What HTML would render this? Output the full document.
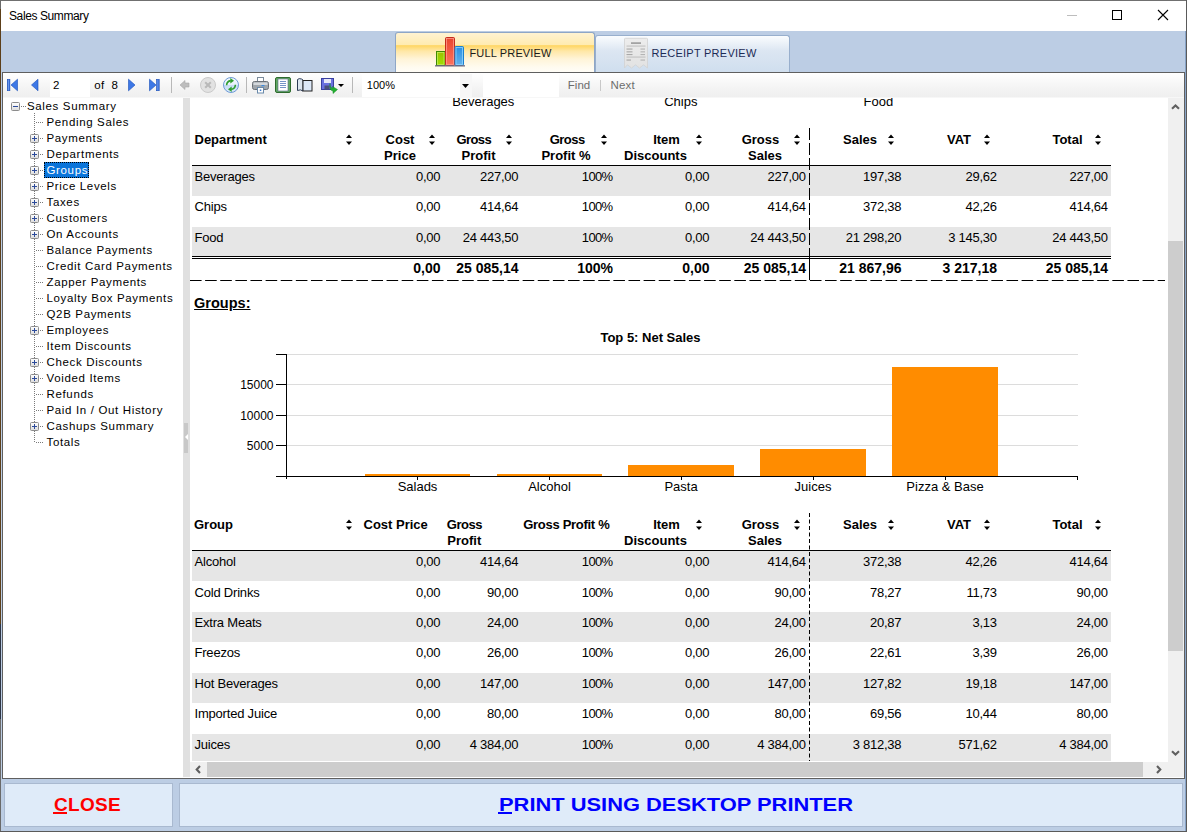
<!DOCTYPE html>
<html><head><meta charset="utf-8"><style>
*{margin:0;padding:0;box-sizing:border-box}
html,body{width:1187px;height:832px;overflow:hidden;background:#fff;font-family:"Liberation Sans",sans-serif}
.t{position:absolute;white-space:pre}
.r{position:absolute}
svg{position:absolute;overflow:visible}
</style></head><body>
<div class="r" style="left:0px;top:0px;width:1187px;height:832px;background:#BCCDE4"></div>
<div class="r" style="left:0px;top:0px;width:1187px;height:31px;background:#fff"></div>
<div class="r" style="left:0px;top:0px;width:1187px;height:1px;background:#707070"></div>
<div class="r" style="left:0px;top:0px;width:1px;height:832px;background:#6a6a6a"></div>
<div class="r" style="left:0px;top:9px;width:1px;height:615px;background:#5C3F1A"></div>
<div class="r" style="left:0px;top:624px;width:1px;height:95px;background:#2E3646"></div>
<div class="r" style="left:1186px;top:0px;width:1px;height:832px;background:#5a5a5a"></div>
<div class="r" style="left:0px;top:831px;width:1187px;height:1px;background:#5a5a5a"></div>
<div class="t" style="top:7.53px;font-size:12px;line-height:16px;color:#000;letter-spacing:-0.4px;left:9px;">Sales Summary</div>
<svg style="left:1067px;top:15px" width="10" height="1"><rect x="0" y="0" width="10" height="1" fill="#BDBDBD"/></svg>
<svg style="left:1112px;top:10px" width="10" height="10"><rect x="0.5" y="0.5" width="9" height="9" fill="none" stroke="#000" stroke-width="1"/></svg>
<svg style="left:1158px;top:10px" width="10" height="10"><path d="M0 0L10 10M10 0L0 10" stroke="#000" stroke-width="1.1"/></svg>
<div class="r" style="left:395px;top:32px;width:200px;height:41px;background:linear-gradient(#FFF3D2 0%,#FFEBB0 30%,#FFD663 31.5%,#FFE7A6 45%,#FFF4D8 65%,#FFFBEF 85%,#FFFDF8 100%);border:1px solid #8EA6C6;border-bottom:none;border-radius:3px 3px 0 0"></div>
<div class="r" style="left:595px;top:35px;width:195px;height:38px;background:linear-gradient(#FAFCFE 0%,#DCE6F2 40%,#CFDEEE 100%);border:1px solid #98AFCD;border-bottom:none;border-radius:3px 3px 0 0"></div>
<div class="t" style="top:45.66px;font-size:11px;line-height:15px;color:#1a1a1a;letter-spacing:0.15px;left:469.5px;">FULL PREVIEW</div>
<div class="t" style="top:45.66px;font-size:11px;line-height:15px;color:#1C2B55;letter-spacing:0.25px;left:651.5px;">RECEIPT PREVIEW</div>
<svg style="left:435px;top:37px" width="30" height="30">
<defs><linearGradient id="cg" x1="0" y1="0" x2="0" y2="1"><stop offset="0" stop-color="#9CC000"/><stop offset="1" stop-color="#A0E000"/></linearGradient>
<linearGradient id="cr" x1="0" y1="0" x2="0" y2="1"><stop offset="0" stop-color="#E8452C"/><stop offset="1" stop-color="#FF735E"/></linearGradient>
<linearGradient id="cb" x1="0" y1="0" x2="0" y2="1"><stop offset="0" stop-color="#2A8EE0"/><stop offset="1" stop-color="#66B4EC"/></linearGradient></defs>
<rect x="1.5" y="14.5" width="8.5" height="14" fill="url(#cg)" stroke="#3E8A00" stroke-width="1"/>
<rect x="2.5" y="15.5" width="6.5" height="12" fill="none" stroke="#C4EA5A" stroke-width="0.8"/>
<rect x="10.5" y="0.5" width="9" height="28" rx="1" fill="url(#cr)" stroke="#C32C1C" stroke-width="1"/>
<rect x="11.5" y="1.5" width="7" height="26" fill="none" stroke="#FF9C8A" stroke-width="0.8"/>
<rect x="20" y="9.5" width="8.5" height="19" rx="1" fill="url(#cb)" stroke="#1A80D0" stroke-width="1"/>
<rect x="21" y="10.5" width="6.5" height="17" fill="none" stroke="#8ED4FF" stroke-width="0.8"/>
<rect x="0" y="28.2" width="30" height="1.3" fill="#6E6A80"/>
</svg>
<svg style="left:624px;top:37.5px" width="25" height="31">
<defs><linearGradient id="rg" x1="0" y1="0" x2="0" y2="1"><stop offset="0" stop-color="#EDEDED"/><stop offset="1" stop-color="#E2E2E2"/></linearGradient></defs>
<path d="M0.5 1 Q0.5 0.3 1.5 0.3 H22.5 Q23.5 0.3 23.5 1 V30 L19.5 26.8 L15.5 30 L11.5 26.8 L7.5 30 L3.5 26.8 L0.5 30 Z" fill="url(#rg)" stroke="#D2D2D2" stroke-width="0.8"/>
<rect x="7" y="4.3" width="10" height="1.6" fill="#9c9c9c"/>
<rect x="2.5" y="7.6" width="19" height="0.9" fill="#b8b8b8"/>
<rect x="2.5" y="10.5" width="6" height="1.1" fill="#a8a8a8"/><rect x="16.5" y="10.5" width="4.5" height="1.1" fill="#b4b4b4"/>
<rect x="2.5" y="13.3" width="6" height="1.1" fill="#a8a8a8"/><rect x="16.5" y="13.3" width="4.5" height="1.1" fill="#b4b4b4"/>
<rect x="2.5" y="16" width="6" height="1.1" fill="#a8a8a8"/><rect x="16.5" y="16" width="4.5" height="1.1" fill="#b4b4b4"/>
<rect x="2.5" y="18.6" width="19" height="0.9" fill="#b8b8b8"/>
<rect x="2.5" y="21.5" width="4.5" height="1.1" fill="#a8a8a8"/><rect x="16.5" y="21.5" width="4.5" height="1.1" fill="#b4b4b4"/>
</svg>
<div class="r" style="left:2px;top:72px;width:1183px;height:707px;background:#fff;border:1px solid #5F5F5F"></div>
<div class="r" style="left:3px;top:73px;width:1181px;height:25px;background:linear-gradient(#FFFFFF,#F4F4F4 60%,#EFEFEF)"></div>
<div class="r" style="left:3px;top:97px;width:1181px;height:1px;background:#F7F7F7"></div>
<svg style="left:7px;top:79px" width="12" height="12"><defs><linearGradient id="bg1" x1="0" y1="0" x2="1" y2="0"><stop offset="0" stop-color="#1E56D0"/><stop offset="0.5" stop-color="#6E9CF0"/><stop offset="1" stop-color="#1E56D0"/></linearGradient></defs><rect x="0.3" y="0.3" width="2.6" height="11.4" fill="url(#bg1)" stroke="#1A4FB8" stroke-width="0.6"/><path d="M10.5 0.2 L4 6 L10.5 11.8 Z" fill="#3D78E6" stroke="#1A4FB8" stroke-width="0.6"/></svg>
<svg style="left:31px;top:79px" width="8" height="12"><path d="M7 0.2 L0.5 6 L7 11.8 Z" fill="#3D78E6" stroke="#1A4FB8" stroke-width="0.6"/></svg>
<div class="r" style="left:50px;top:74px;width:40px;height:23px;background:#fff"></div>
<div class="t" style="top:77.95px;font-size:11.5px;line-height:15.5px;color:#000;letter-spacing:0.2px;left:53px;">2</div>
<div class="t" style="top:77.95px;font-size:11.5px;line-height:15.5px;color:#000;letter-spacing:0.4px;left:94.3px;">of</div>
<div class="t" style="top:77.95px;font-size:11.5px;line-height:15.5px;color:#000;left:111.5px;">8</div>
<svg style="left:127.5px;top:79px" width="8" height="12"><path d="M0.5 0.2 L7 6 L0.5 11.8 Z" fill="#3D78E6" stroke="#1A4FB8" stroke-width="0.6"/></svg>
<svg style="left:148.5px;top:79px" width="12" height="12"><defs><linearGradient id="bg2" x1="0" y1="0" x2="1" y2="0"><stop offset="0" stop-color="#1E56D0"/><stop offset="0.5" stop-color="#6E9CF0"/><stop offset="1" stop-color="#1E56D0"/></linearGradient></defs><path d="M0.5 0.2 L7 6 L0.5 11.8 Z" fill="#3D78E6" stroke="#1A4FB8" stroke-width="0.6"/><rect x="7.6" y="0.3" width="2.6" height="11.4" fill="url(#bg2)" stroke="#1A4FB8" stroke-width="0.6"/></svg>
<div class="r" style="left:171px;top:77px;width:1px;height:16px;background:#B8B8B8"></div>
<svg style="left:180px;top:79px" width="10" height="12"><path d="M0 6 L5 1.5 V4 H9 V8 H5 V10.5 Z" fill="#BDBDBD" stroke="#A8A8A8" stroke-width="0.6"/></svg>
<svg style="left:200px;top:77px" width="16" height="16"><circle cx="8" cy="8" r="7.5" fill="#E2E2E2" stroke="#CACACA"/><path d="M5.2 5.2 L10.8 10.8 M10.8 5.2 L5.2 10.8" stroke="#B9B9B9" stroke-width="2"/></svg>
<svg style="left:223px;top:77px" width="16" height="16"><defs><linearGradient id="rf" x1="0" y1="0" x2="0" y2="1"><stop offset="0" stop-color="#F4F8FE"/><stop offset="0.5" stop-color="#E6F0FC"/><stop offset="0.52" stop-color="#C6DCF6"/><stop offset="1" stop-color="#DCEAFA"/></linearGradient></defs><circle cx="8" cy="8" r="7.5" fill="url(#rf)" stroke="#6E9BD6"/><path d="M3.6 8.2 Q3.8 4.2 7.8 3.6" fill="none" stroke="#2E9E2E" stroke-width="1.6"/><path d="M7.3 0.9 L11 3.8 L7.3 6.6 Z" fill="#2E9E2E"/><path d="M12.4 7.8 Q12.2 11.8 8.2 12.4" fill="none" stroke="#2E9E2E" stroke-width="1.6"/><path d="M8.7 9.4 L5 12.2 L8.7 15.1 Z" fill="#2E9E2E"/></svg>
<div class="r" style="left:246px;top:77px;width:1px;height:16px;background:#B8B8B8"></div>
<svg style="left:252px;top:77px" width="17" height="17"><rect x="5.5" y="0.5" width="6" height="5" fill="#fff" stroke="#7a8a9a"/><rect x="0.5" y="4.5" width="16" height="8" rx="2" fill="#A0A6AC" stroke="#6a7076"/><rect x="1.5" y="5.5" width="14" height="2.5" fill="#D4D8DC"/><rect x="9.5" y="8" width="3" height="1.2" fill="#3B8BE0"/><rect x="5.5" y="10.5" width="6" height="5.5" fill="#fff" stroke="#6a8aaa"/><rect x="7.8" y="12.5" width="1.5" height="1.5" fill="#3B7BD0"/></svg>
<svg style="left:275px;top:77px" width="16" height="16"><rect x="0.5" y="0.5" width="15" height="15" rx="1.5" fill="#62A862" stroke="#2E6B2E"/><rect x="3" y="2" width="10" height="12" fill="#fff" stroke="#5a6a8a" stroke-width="0.6"/><path d="M5 4.5H11M5 6.5H11M5 8.5H11M5 10.5H11" stroke="#5078B8" stroke-width="0.8"/></svg>
<svg style="left:297px;top:78px" width="16" height="14"><path d="M0.5 1.5 Q2 0 4.5 1 L6 2 V13 Q3.5 11 0.5 12.5 Z" fill="#DDE6F0" stroke="#2B3A55"/><rect x="6" y="2.5" width="9" height="10.5" fill="#DCE8F8" stroke="#222"/></svg>
<svg style="left:321px;top:78px" width="23" height="17"><rect x="0.5" y="0.5" width="12" height="11" fill="#6A70E0" stroke="#3940A0"/><rect x="3" y="1" width="7" height="4" fill="#E6E8F8"/><rect x="3.5" y="7.5" width="5" height="4" fill="#4a4f7a"/><path d="M9 5.5 Q8.5 10 12 10.5 L11.5 8.5 L16.5 11.5 L12 15.5 L12 13 Q8 12.5 9 5.5 Z" fill="#22B030" stroke="#138a20" stroke-width="0.5"/><path d="M17 6 L23 6 L20 9 Z" fill="#000"/></svg>
<div class="r" style="left:352px;top:77px;width:1px;height:16px;background:#B8B8B8"></div>
<div class="r" style="left:362px;top:74px;width:110px;height:23px;background:#fff"></div>
<div class="r" style="left:460px;top:74px;width:12px;height:23px;background:#F7F7F7"></div>
<div class="t" style="top:78.36px;font-size:11px;line-height:15px;color:#000;letter-spacing:0.1px;left:366.7px;">100%</div>
<svg style="left:462px;top:84px" width="7" height="4"><path d="M0 0H7L3.5 4Z" fill="#000"/></svg>
<div class="r" style="left:483px;top:74px;width:76px;height:23px;background:#fff"></div>
<div class="t" style="top:77.95px;font-size:11.5px;line-height:15.5px;color:#6d6d6d;left:567.8px;">Find</div>
<div class="r" style="left:600px;top:80px;width:1px;height:11px;background:#C8C8C8"></div>
<div class="t" style="top:77.95px;font-size:11.5px;line-height:15.5px;color:#6d6d6d;letter-spacing:0.2px;left:610.5px;">Next</div>
<div class="r" style="left:3px;top:98px;width:180px;height:679px;background:#fff"></div>
<div class="r" style="left:34px;top:113px;width:1px;height:330px;background:repeating-linear-gradient(#7a7a7a 0 1px, transparent 1px 2px)"></div>
<div class="r" style="left:21px;top:106px;width:5px;height:1px;background:repeating-linear-gradient(90deg,#7a7a7a 0 1px,transparent 1px 2px)"></div>
<svg style="left:11px;top:102px" width="9" height="9"><defs><linearGradient id="eg0" x1="0" y1="0" x2="0" y2="1"><stop offset="0" stop-color="#FFFFFF"/><stop offset="1" stop-color="#DCDCDC"/></linearGradient></defs><rect x="0.5" y="0.5" width="8" height="8" rx="1" fill="url(#eg0)" stroke="#8C8C8C"/><path d="M2 4.5H7" stroke="#2B4A9A" stroke-width="1"/></svg>
<div class="t" style="top:98.75px;font-size:11.5px;line-height:15.5px;color:#000;letter-spacing:0.65px;left:27px;">Sales Summary</div>
<div class="r" style="left:36px;top:122px;width:8px;height:1px;background:repeating-linear-gradient(90deg,#7a7a7a 0 1px,transparent 1px 2px)"></div>
<div class="t" style="top:114.75px;font-size:11.5px;line-height:15.5px;color:#000;letter-spacing:0.65px;left:46.5px;">Pending Sales</div>
<div class="r" style="left:36px;top:138px;width:8px;height:1px;background:repeating-linear-gradient(90deg,#7a7a7a 0 1px,transparent 1px 2px)"></div>
<svg style="left:30px;top:134px" width="9" height="9"><defs><linearGradient id="eg2" x1="0" y1="0" x2="0" y2="1"><stop offset="0" stop-color="#FFFFFF"/><stop offset="1" stop-color="#DCDCDC"/></linearGradient></defs><rect x="0.5" y="0.5" width="8" height="8" rx="1" fill="url(#eg2)" stroke="#8C8C8C"/><path d="M2 4.5H7M4.5 2V7" stroke="#2B4A9A" stroke-width="1"/></svg>
<div class="t" style="top:130.75px;font-size:11.5px;line-height:15.5px;color:#000;letter-spacing:0.65px;left:46.5px;">Payments</div>
<div class="r" style="left:36px;top:154px;width:8px;height:1px;background:repeating-linear-gradient(90deg,#7a7a7a 0 1px,transparent 1px 2px)"></div>
<svg style="left:30px;top:150px" width="9" height="9"><defs><linearGradient id="eg3" x1="0" y1="0" x2="0" y2="1"><stop offset="0" stop-color="#FFFFFF"/><stop offset="1" stop-color="#DCDCDC"/></linearGradient></defs><rect x="0.5" y="0.5" width="8" height="8" rx="1" fill="url(#eg3)" stroke="#8C8C8C"/><path d="M2 4.5H7M4.5 2V7" stroke="#2B4A9A" stroke-width="1"/></svg>
<div class="t" style="top:146.75px;font-size:11.5px;line-height:15.5px;color:#000;letter-spacing:0.65px;left:46.5px;">Departments</div>
<div class="r" style="left:36px;top:170px;width:8px;height:1px;background:repeating-linear-gradient(90deg,#7a7a7a 0 1px,transparent 1px 2px)"></div>
<svg style="left:30px;top:166px" width="9" height="9"><defs><linearGradient id="eg4" x1="0" y1="0" x2="0" y2="1"><stop offset="0" stop-color="#FFFFFF"/><stop offset="1" stop-color="#DCDCDC"/></linearGradient></defs><rect x="0.5" y="0.5" width="8" height="8" rx="1" fill="url(#eg4)" stroke="#8C8C8C"/><path d="M2 4.5H7M4.5 2V7" stroke="#2B4A9A" stroke-width="1"/></svg>
<div class="r" style="left:44px;top:162px;width:45px;height:16px;background:#0A74DA;outline:1px dotted #000;outline-offset:-1px"></div>
<div class="t" style="top:162.75px;font-size:11.5px;line-height:15.5px;color:#fff;letter-spacing:0.65px;left:46.5px;">Groups</div>
<div class="r" style="left:36px;top:186px;width:8px;height:1px;background:repeating-linear-gradient(90deg,#7a7a7a 0 1px,transparent 1px 2px)"></div>
<svg style="left:30px;top:182px" width="9" height="9"><defs><linearGradient id="eg5" x1="0" y1="0" x2="0" y2="1"><stop offset="0" stop-color="#FFFFFF"/><stop offset="1" stop-color="#DCDCDC"/></linearGradient></defs><rect x="0.5" y="0.5" width="8" height="8" rx="1" fill="url(#eg5)" stroke="#8C8C8C"/><path d="M2 4.5H7M4.5 2V7" stroke="#2B4A9A" stroke-width="1"/></svg>
<div class="t" style="top:178.75px;font-size:11.5px;line-height:15.5px;color:#000;letter-spacing:0.65px;left:46.5px;">Price Levels</div>
<div class="r" style="left:36px;top:202px;width:8px;height:1px;background:repeating-linear-gradient(90deg,#7a7a7a 0 1px,transparent 1px 2px)"></div>
<svg style="left:30px;top:198px" width="9" height="9"><defs><linearGradient id="eg6" x1="0" y1="0" x2="0" y2="1"><stop offset="0" stop-color="#FFFFFF"/><stop offset="1" stop-color="#DCDCDC"/></linearGradient></defs><rect x="0.5" y="0.5" width="8" height="8" rx="1" fill="url(#eg6)" stroke="#8C8C8C"/><path d="M2 4.5H7M4.5 2V7" stroke="#2B4A9A" stroke-width="1"/></svg>
<div class="t" style="top:194.75px;font-size:11.5px;line-height:15.5px;color:#000;letter-spacing:0.65px;left:46.5px;">Taxes</div>
<div class="r" style="left:36px;top:218px;width:8px;height:1px;background:repeating-linear-gradient(90deg,#7a7a7a 0 1px,transparent 1px 2px)"></div>
<svg style="left:30px;top:214px" width="9" height="9"><defs><linearGradient id="eg7" x1="0" y1="0" x2="0" y2="1"><stop offset="0" stop-color="#FFFFFF"/><stop offset="1" stop-color="#DCDCDC"/></linearGradient></defs><rect x="0.5" y="0.5" width="8" height="8" rx="1" fill="url(#eg7)" stroke="#8C8C8C"/><path d="M2 4.5H7M4.5 2V7" stroke="#2B4A9A" stroke-width="1"/></svg>
<div class="t" style="top:210.75px;font-size:11.5px;line-height:15.5px;color:#000;letter-spacing:0.65px;left:46.5px;">Customers</div>
<div class="r" style="left:36px;top:234px;width:8px;height:1px;background:repeating-linear-gradient(90deg,#7a7a7a 0 1px,transparent 1px 2px)"></div>
<svg style="left:30px;top:230px" width="9" height="9"><defs><linearGradient id="eg8" x1="0" y1="0" x2="0" y2="1"><stop offset="0" stop-color="#FFFFFF"/><stop offset="1" stop-color="#DCDCDC"/></linearGradient></defs><rect x="0.5" y="0.5" width="8" height="8" rx="1" fill="url(#eg8)" stroke="#8C8C8C"/><path d="M2 4.5H7M4.5 2V7" stroke="#2B4A9A" stroke-width="1"/></svg>
<div class="t" style="top:226.75px;font-size:11.5px;line-height:15.5px;color:#000;letter-spacing:0.65px;left:46.5px;">On Accounts</div>
<div class="r" style="left:36px;top:250px;width:8px;height:1px;background:repeating-linear-gradient(90deg,#7a7a7a 0 1px,transparent 1px 2px)"></div>
<div class="t" style="top:242.75px;font-size:11.5px;line-height:15.5px;color:#000;letter-spacing:0.65px;left:46.5px;">Balance Payments</div>
<div class="r" style="left:36px;top:266px;width:8px;height:1px;background:repeating-linear-gradient(90deg,#7a7a7a 0 1px,transparent 1px 2px)"></div>
<div class="t" style="top:258.75px;font-size:11.5px;line-height:15.5px;color:#000;letter-spacing:0.65px;left:46.5px;">Credit Card Payments</div>
<div class="r" style="left:36px;top:282px;width:8px;height:1px;background:repeating-linear-gradient(90deg,#7a7a7a 0 1px,transparent 1px 2px)"></div>
<div class="t" style="top:274.75px;font-size:11.5px;line-height:15.5px;color:#000;letter-spacing:0.65px;left:46.5px;">Zapper Payments</div>
<div class="r" style="left:36px;top:298px;width:8px;height:1px;background:repeating-linear-gradient(90deg,#7a7a7a 0 1px,transparent 1px 2px)"></div>
<div class="t" style="top:290.75px;font-size:11.5px;line-height:15.5px;color:#000;letter-spacing:0.65px;left:46.5px;">Loyalty Box Payments</div>
<div class="r" style="left:36px;top:314px;width:8px;height:1px;background:repeating-linear-gradient(90deg,#7a7a7a 0 1px,transparent 1px 2px)"></div>
<div class="t" style="top:306.75px;font-size:11.5px;line-height:15.5px;color:#000;letter-spacing:0.65px;left:46.5px;">Q2B Payments</div>
<div class="r" style="left:36px;top:330px;width:8px;height:1px;background:repeating-linear-gradient(90deg,#7a7a7a 0 1px,transparent 1px 2px)"></div>
<svg style="left:30px;top:326px" width="9" height="9"><defs><linearGradient id="eg14" x1="0" y1="0" x2="0" y2="1"><stop offset="0" stop-color="#FFFFFF"/><stop offset="1" stop-color="#DCDCDC"/></linearGradient></defs><rect x="0.5" y="0.5" width="8" height="8" rx="1" fill="url(#eg14)" stroke="#8C8C8C"/><path d="M2 4.5H7M4.5 2V7" stroke="#2B4A9A" stroke-width="1"/></svg>
<div class="t" style="top:322.75px;font-size:11.5px;line-height:15.5px;color:#000;letter-spacing:0.65px;left:46.5px;">Employees</div>
<div class="r" style="left:36px;top:346px;width:8px;height:1px;background:repeating-linear-gradient(90deg,#7a7a7a 0 1px,transparent 1px 2px)"></div>
<div class="t" style="top:338.75px;font-size:11.5px;line-height:15.5px;color:#000;letter-spacing:0.65px;left:46.5px;">Item Discounts</div>
<div class="r" style="left:36px;top:362px;width:8px;height:1px;background:repeating-linear-gradient(90deg,#7a7a7a 0 1px,transparent 1px 2px)"></div>
<svg style="left:30px;top:358px" width="9" height="9"><defs><linearGradient id="eg16" x1="0" y1="0" x2="0" y2="1"><stop offset="0" stop-color="#FFFFFF"/><stop offset="1" stop-color="#DCDCDC"/></linearGradient></defs><rect x="0.5" y="0.5" width="8" height="8" rx="1" fill="url(#eg16)" stroke="#8C8C8C"/><path d="M2 4.5H7M4.5 2V7" stroke="#2B4A9A" stroke-width="1"/></svg>
<div class="t" style="top:354.75px;font-size:11.5px;line-height:15.5px;color:#000;letter-spacing:0.65px;left:46.5px;">Check Discounts</div>
<div class="r" style="left:36px;top:378px;width:8px;height:1px;background:repeating-linear-gradient(90deg,#7a7a7a 0 1px,transparent 1px 2px)"></div>
<svg style="left:30px;top:374px" width="9" height="9"><defs><linearGradient id="eg17" x1="0" y1="0" x2="0" y2="1"><stop offset="0" stop-color="#FFFFFF"/><stop offset="1" stop-color="#DCDCDC"/></linearGradient></defs><rect x="0.5" y="0.5" width="8" height="8" rx="1" fill="url(#eg17)" stroke="#8C8C8C"/><path d="M2 4.5H7M4.5 2V7" stroke="#2B4A9A" stroke-width="1"/></svg>
<div class="t" style="top:370.75px;font-size:11.5px;line-height:15.5px;color:#000;letter-spacing:0.65px;left:46.5px;">Voided Items</div>
<div class="r" style="left:36px;top:394px;width:8px;height:1px;background:repeating-linear-gradient(90deg,#7a7a7a 0 1px,transparent 1px 2px)"></div>
<div class="t" style="top:386.75px;font-size:11.5px;line-height:15.5px;color:#000;letter-spacing:0.65px;left:46.5px;">Refunds</div>
<div class="r" style="left:36px;top:410px;width:8px;height:1px;background:repeating-linear-gradient(90deg,#7a7a7a 0 1px,transparent 1px 2px)"></div>
<div class="t" style="top:402.75px;font-size:11.5px;line-height:15.5px;color:#000;letter-spacing:0.65px;left:46.5px;">Paid In / Out History</div>
<div class="r" style="left:36px;top:426px;width:8px;height:1px;background:repeating-linear-gradient(90deg,#7a7a7a 0 1px,transparent 1px 2px)"></div>
<svg style="left:30px;top:422px" width="9" height="9"><defs><linearGradient id="eg20" x1="0" y1="0" x2="0" y2="1"><stop offset="0" stop-color="#FFFFFF"/><stop offset="1" stop-color="#DCDCDC"/></linearGradient></defs><rect x="0.5" y="0.5" width="8" height="8" rx="1" fill="url(#eg20)" stroke="#8C8C8C"/><path d="M2 4.5H7M4.5 2V7" stroke="#2B4A9A" stroke-width="1"/></svg>
<div class="t" style="top:418.75px;font-size:11.5px;line-height:15.5px;color:#000;letter-spacing:0.65px;left:46.5px;">Cashups Summary</div>
<div class="r" style="left:36px;top:442px;width:8px;height:1px;background:repeating-linear-gradient(90deg,#7a7a7a 0 1px,transparent 1px 2px)"></div>
<div class="t" style="top:434.75px;font-size:11.5px;line-height:15.5px;color:#000;letter-spacing:0.65px;left:46.5px;">Totals</div>
<div class="r" style="left:183px;top:98px;width:7px;height:679px;background:#E0E0E0"></div>
<div class="r" style="left:184px;top:423px;width:4px;height:30px;background:#C8C8C8"></div>
<svg style="left:185px;top:434px" width="3" height="6"><path d="M3 0 L0 3 L3 6Z" fill="#fff"/></svg>
<div class="r" style="left:190px;top:98px;width:978px;height:663px;overflow:hidden;background:#fff">
<div class="r" style="left:-190px;top:-98px;width:1187px;height:832px">
<div class="t" style="top:92.70px;font-size:13px;line-height:17px;color:#000;left:452.2px;">Beverages</div>
<div class="t" style="top:92.70px;font-size:13px;line-height:17px;color:#000;left:664.2px;">Chips</div>
<div class="t" style="top:92.70px;font-size:13px;line-height:17px;color:#000;left:863.6px;">Food</div>
<div class="t" style="top:131.20px;font-size:13px;line-height:17px;color:#000;font-weight:bold;left:194.5px;">Department</div>
<svg style="left:345.5px;top:134px" width="6" height="12"><path d="M3 0.5 L6 4 H0 Z M0 7.4 H6 L3 11 Z" fill="#000"/></svg>
<div class="t" style="top:131.20px;font-size:13px;line-height:17px;color:#000;font-weight:bold;left:100px;width:600px;text-align:center;">Cost</div>
<div class="t" style="top:147.20px;font-size:13px;line-height:17px;color:#000;font-weight:bold;left:100px;width:600px;text-align:center;">Price</div>
<svg style="left:428.5px;top:134px" width="6" height="12"><path d="M3 0.5 L6 4 H0 Z M0 7.4 H6 L3 11 Z" fill="#000"/></svg>
<div class="t" style="top:131.20px;font-size:13px;line-height:17px;color:#000;font-weight:bold;letter-spacing:-0.6px;left:173.8px;width:600px;text-align:center;">Gross</div>
<div class="t" style="top:147.20px;font-size:13px;line-height:17px;color:#000;font-weight:bold;left:178.5px;width:600px;text-align:center;">Profit</div>
<svg style="left:505.5px;top:134px" width="6" height="12"><path d="M3 0.5 L6 4 H0 Z M0 7.4 H6 L3 11 Z" fill="#000"/></svg>
<div class="t" style="top:131.20px;font-size:13px;line-height:17px;color:#000;font-weight:bold;letter-spacing:-0.5px;left:267.20000000000005px;width:600px;text-align:center;">Gross</div>
<div class="t" style="top:147.20px;font-size:13px;line-height:17px;color:#000;font-weight:bold;left:266px;width:600px;text-align:center;">Profit %</div>
<svg style="left:600.5px;top:134px" width="6" height="12"><path d="M3 0.5 L6 4 H0 Z M0 7.4 H6 L3 11 Z" fill="#000"/></svg>
<div class="t" style="top:131.20px;font-size:13px;line-height:17px;color:#000;font-weight:bold;left:366.5px;width:600px;text-align:center;">Item</div>
<div class="t" style="top:147.20px;font-size:13px;line-height:17px;color:#000;font-weight:bold;left:355.5px;width:600px;text-align:center;">Discounts</div>
<svg style="left:696px;top:134px" width="6" height="12"><path d="M3 0.5 L6 4 H0 Z M0 7.4 H6 L3 11 Z" fill="#000"/></svg>
<div class="t" style="top:131.20px;font-size:13px;line-height:17px;color:#000;font-weight:bold;left:460.5px;width:600px;text-align:center;">Gross</div>
<div class="t" style="top:147.20px;font-size:13px;line-height:17px;color:#000;font-weight:bold;left:465px;width:600px;text-align:center;">Sales</div>
<svg style="left:793.5px;top:134px" width="6" height="12"><path d="M3 0.5 L6 4 H0 Z M0 7.4 H6 L3 11 Z" fill="#000"/></svg>
<div class="t" style="top:131.20px;font-size:13px;line-height:17px;color:#000;font-weight:bold;left:560px;width:600px;text-align:center;">Sales</div>
<svg style="left:888px;top:134px" width="6" height="12"><path d="M3 0.5 L6 4 H0 Z M0 7.4 H6 L3 11 Z" fill="#000"/></svg>
<div class="t" style="top:131.20px;font-size:13px;line-height:17px;color:#000;font-weight:bold;left:659px;width:600px;text-align:center;">VAT</div>
<svg style="left:983.5px;top:134px" width="6" height="12"><path d="M3 0.5 L6 4 H0 Z M0 7.4 H6 L3 11 Z" fill="#000"/></svg>
<div class="t" style="top:131.20px;font-size:13px;line-height:17px;color:#000;font-weight:bold;left:767.5px;width:600px;text-align:center;">Total</div>
<svg style="left:1094.5px;top:134px" width="6" height="12"><path d="M3 0.5 L6 4 H0 Z M0 7.4 H6 L3 11 Z" fill="#000"/></svg>
<div class="r" style="left:192px;top:165px;width:919px;height:1px;background:#000"></div>
<div class="r" style="left:192px;top:166px;width:919px;height:30px;background:#E6E6E6"></div>
<div class="t" style="top:168.00px;font-size:13px;line-height:17px;color:#000;letter-spacing:-0.2px;left:194.5px;">Beverages</div>
<div class="t" style="top:168.00px;font-size:13px;line-height:17px;color:#000;letter-spacing:-0.25px;right:746.75px;text-align:right;">0,00</div>
<div class="t" style="top:168.00px;font-size:13px;line-height:17px;color:#000;letter-spacing:-0.25px;right:668.75px;text-align:right;">227,00</div>
<div class="t" style="top:168.00px;font-size:13px;line-height:17px;color:#000;letter-spacing:-0.7px;right:574.7px;text-align:right;">100%</div>
<div class="t" style="top:168.00px;font-size:13px;line-height:17px;color:#000;letter-spacing:-0.25px;right:477.75px;text-align:right;">0,00</div>
<div class="t" style="top:168.00px;font-size:13px;line-height:17px;color:#000;letter-spacing:-0.25px;right:381.25px;text-align:right;">227,00</div>
<div class="t" style="top:168.00px;font-size:13px;line-height:17px;color:#000;letter-spacing:-0.25px;right:285.75px;text-align:right;">197,38</div>
<div class="t" style="top:168.00px;font-size:13px;line-height:17px;color:#000;letter-spacing:-0.25px;right:190.25px;text-align:right;">29,62</div>
<div class="t" style="top:168.00px;font-size:13px;line-height:17px;color:#000;letter-spacing:-0.25px;right:79.25px;text-align:right;">227,00</div>
<div class="t" style="top:198.00px;font-size:13px;line-height:17px;color:#000;letter-spacing:-0.2px;left:194.5px;">Chips</div>
<div class="t" style="top:198.00px;font-size:13px;line-height:17px;color:#000;letter-spacing:-0.25px;right:746.75px;text-align:right;">0,00</div>
<div class="t" style="top:198.00px;font-size:13px;line-height:17px;color:#000;letter-spacing:-0.25px;right:668.75px;text-align:right;">414,64</div>
<div class="t" style="top:198.00px;font-size:13px;line-height:17px;color:#000;letter-spacing:-0.7px;right:574.7px;text-align:right;">100%</div>
<div class="t" style="top:198.00px;font-size:13px;line-height:17px;color:#000;letter-spacing:-0.25px;right:477.75px;text-align:right;">0,00</div>
<div class="t" style="top:198.00px;font-size:13px;line-height:17px;color:#000;letter-spacing:-0.25px;right:381.25px;text-align:right;">414,64</div>
<div class="t" style="top:198.00px;font-size:13px;line-height:17px;color:#000;letter-spacing:-0.25px;right:285.75px;text-align:right;">372,38</div>
<div class="t" style="top:198.00px;font-size:13px;line-height:17px;color:#000;letter-spacing:-0.25px;right:190.25px;text-align:right;">42,26</div>
<div class="t" style="top:198.00px;font-size:13px;line-height:17px;color:#000;letter-spacing:-0.25px;right:79.25px;text-align:right;">414,64</div>
<div class="r" style="left:192px;top:227px;width:919px;height:29px;background:#E6E6E6"></div>
<div class="t" style="top:228.70px;font-size:13px;line-height:17px;color:#000;letter-spacing:-0.2px;left:194.5px;">Food</div>
<div class="t" style="top:228.70px;font-size:13px;line-height:17px;color:#000;letter-spacing:-0.25px;right:746.75px;text-align:right;">0,00</div>
<div class="t" style="top:228.70px;font-size:13px;line-height:17px;color:#000;letter-spacing:-0.25px;right:668.75px;text-align:right;">24 443,50</div>
<div class="t" style="top:228.70px;font-size:13px;line-height:17px;color:#000;letter-spacing:-0.7px;right:574.7px;text-align:right;">100%</div>
<div class="t" style="top:228.70px;font-size:13px;line-height:17px;color:#000;letter-spacing:-0.25px;right:477.75px;text-align:right;">0,00</div>
<div class="t" style="top:228.70px;font-size:13px;line-height:17px;color:#000;letter-spacing:-0.25px;right:381.25px;text-align:right;">24 443,50</div>
<div class="t" style="top:228.70px;font-size:13px;line-height:17px;color:#000;letter-spacing:-0.25px;right:285.75px;text-align:right;">21 298,20</div>
<div class="t" style="top:228.70px;font-size:13px;line-height:17px;color:#000;letter-spacing:-0.25px;right:190.25px;text-align:right;">3 145,30</div>
<div class="t" style="top:228.70px;font-size:13px;line-height:17px;color:#000;letter-spacing:-0.25px;right:79.25px;text-align:right;">24 443,50</div>
<div class="r" style="left:192px;top:256px;width:919px;height:1px;background:#000"></div>
<div class="r" style="left:192px;top:258px;width:919px;height:1px;background:#000"></div>
<div class="t" style="top:259.17px;font-size:14px;line-height:18px;color:#000;font-weight:bold;right:746.5px;text-align:right;">0,00</div>
<div class="t" style="top:259.17px;font-size:14px;line-height:18px;color:#000;font-weight:bold;right:668.5px;text-align:right;">25 085,14</div>
<div class="t" style="top:259.17px;font-size:14px;line-height:18px;color:#000;font-weight:bold;right:574px;text-align:right;">100%</div>
<div class="t" style="top:259.17px;font-size:14px;line-height:18px;color:#000;font-weight:bold;right:477.5px;text-align:right;">0,00</div>
<div class="t" style="top:259.17px;font-size:14px;line-height:18px;color:#000;font-weight:bold;right:381px;text-align:right;">25 085,14</div>
<div class="t" style="top:259.17px;font-size:14px;line-height:18px;color:#000;font-weight:bold;right:285.5px;text-align:right;">21 867,96</div>
<div class="t" style="top:259.17px;font-size:14px;line-height:18px;color:#000;font-weight:bold;right:190px;text-align:right;">3 217,18</div>
<div class="t" style="top:259.17px;font-size:14px;line-height:18px;color:#000;font-weight:bold;right:79px;text-align:right;">25 085,14</div>
<svg style="left:190px;top:280px" width="976" height="1"><line x1="0" y1="0.5" x2="975" y2="0.5" stroke="#000" stroke-width="1" stroke-dasharray="11.6 3.52"/></svg>
<svg style="left:809px;top:128px" width="1" height="152"><line x1="0.5" y1="0" x2="0.5" y2="130" stroke="#000" stroke-width="1" stroke-dasharray="12 3"/><line x1="0.5" y1="130" x2="0.5" y2="152" stroke="#000" stroke-width="1"/></svg>
<div class="t" style="top:294.36px;font-size:14.5px;line-height:18.5px;color:#000;font-weight:bold;left:194.1px;text-decoration:underline;">Groups:</div>
<div class="t" style="top:329.00px;font-size:13px;line-height:17px;color:#000;font-weight:bold;left:350.5px;width:600px;text-align:center;">Top 5: Net Sales</div>
<div class="r" style="left:287px;top:354px;width:791px;height:1px;background:#DCDCDC"></div>
<div class="r" style="left:287px;top:384px;width:791px;height:1px;background:#DCDCDC"></div>
<div class="r" style="left:287px;top:415px;width:791px;height:1px;background:#DCDCDC"></div>
<div class="r" style="left:287px;top:445px;width:791px;height:1px;background:#DCDCDC"></div>
<div class="r" style="left:286px;top:354px;width:1px;height:125px;background:#000"></div>
<div class="r" style="left:276px;top:476px;width:802px;height:1px;background:#000"></div>
<div class="r" style="left:276px;top:354px;width:10px;height:1px;background:#000"></div>
<div class="r" style="left:276px;top:384px;width:10px;height:1px;background:#000"></div>
<div class="r" style="left:276px;top:415px;width:10px;height:1px;background:#000"></div>
<div class="r" style="left:276px;top:445px;width:10px;height:1px;background:#000"></div>
<div class="r" style="left:1077px;top:476px;width:1px;height:4px;background:#000"></div>
<div class="t" style="top:376.83px;font-size:12px;line-height:16px;color:#000;right:913.5px;text-align:right;">15000</div>
<div class="t" style="top:407.83px;font-size:12px;line-height:16px;color:#000;right:913.5px;text-align:right;">10000</div>
<div class="t" style="top:437.83px;font-size:12px;line-height:16px;color:#000;right:913.5px;text-align:right;">5000</div>
<div class="r" style="left:365px;top:473.5px;width:105px;height:2.5px;background:#FF8C00"></div>
<div class="r" style="left:417px;top:477px;width:1px;height:3px;background:#000"></div>
<div class="t" style="top:477.70px;font-size:13px;line-height:17px;color:#000;left:117.5px;width:600px;text-align:center;">Salads</div>
<div class="r" style="left:497px;top:473.5px;width:105px;height:2.5px;background:#FF8C00"></div>
<div class="r" style="left:549px;top:477px;width:1px;height:3px;background:#000"></div>
<div class="t" style="top:477.70px;font-size:13px;line-height:17px;color:#000;left:249.5px;width:600px;text-align:center;">Alcohol</div>
<div class="r" style="left:628px;top:465px;width:106px;height:11px;background:#FF8C00"></div>
<div class="r" style="left:681px;top:477px;width:1px;height:3px;background:#000"></div>
<div class="t" style="top:477.70px;font-size:13px;line-height:17px;color:#000;left:381.0px;width:600px;text-align:center;">Pasta</div>
<div class="r" style="left:760px;top:449px;width:106px;height:27px;background:#FF8C00"></div>
<div class="r" style="left:813px;top:477px;width:1px;height:3px;background:#000"></div>
<div class="t" style="top:477.70px;font-size:13px;line-height:17px;color:#000;left:513.0px;width:600px;text-align:center;">Juices</div>
<div class="r" style="left:892px;top:366.5px;width:106px;height:109.5px;background:#FF8C00"></div>
<div class="r" style="left:945px;top:477px;width:1px;height:3px;background:#000"></div>
<div class="t" style="top:477.70px;font-size:13px;line-height:17px;color:#000;left:645.0px;width:600px;text-align:center;">Pizza & Base</div>
<div class="t" style="top:516.20px;font-size:13px;line-height:17px;color:#000;font-weight:bold;left:194px;">Group</div>
<svg style="left:345.5px;top:519px" width="6" height="12"><path d="M3 0.5 L6 4 H0 Z M0 7.4 H6 L3 11 Z" fill="#000"/></svg>
<div class="t" style="top:516.20px;font-size:13px;line-height:17px;color:#000;font-weight:bold;left:363.5px;">Cost Price</div>
<div class="t" style="top:516.20px;font-size:13px;line-height:17px;color:#000;font-weight:bold;letter-spacing:-0.5px;left:446.8px;">Gross</div>
<div class="t" style="top:532.20px;font-size:13px;line-height:17px;color:#000;font-weight:bold;left:447.3px;">Profit</div>
<div class="t" style="top:516.20px;font-size:13px;line-height:17px;color:#000;font-weight:bold;letter-spacing:-0.3px;left:523.3px;">Gross Profit %</div>
<div class="t" style="top:516.20px;font-size:13px;line-height:17px;color:#000;font-weight:bold;left:366.5px;width:600px;text-align:center;">Item</div>
<div class="t" style="top:532.20px;font-size:13px;line-height:17px;color:#000;font-weight:bold;left:355.5px;width:600px;text-align:center;">Discounts</div>
<svg style="left:696px;top:519px" width="6" height="12"><path d="M3 0.5 L6 4 H0 Z M0 7.4 H6 L3 11 Z" fill="#000"/></svg>
<div class="t" style="top:516.20px;font-size:13px;line-height:17px;color:#000;font-weight:bold;left:460.5px;width:600px;text-align:center;">Gross</div>
<div class="t" style="top:532.20px;font-size:13px;line-height:17px;color:#000;font-weight:bold;left:465px;width:600px;text-align:center;">Sales</div>
<svg style="left:793.5px;top:519px" width="6" height="12"><path d="M3 0.5 L6 4 H0 Z M0 7.4 H6 L3 11 Z" fill="#000"/></svg>
<div class="t" style="top:516.20px;font-size:13px;line-height:17px;color:#000;font-weight:bold;left:560px;width:600px;text-align:center;">Sales</div>
<svg style="left:888px;top:519px" width="6" height="12"><path d="M3 0.5 L6 4 H0 Z M0 7.4 H6 L3 11 Z" fill="#000"/></svg>
<div class="t" style="top:516.20px;font-size:13px;line-height:17px;color:#000;font-weight:bold;left:659px;width:600px;text-align:center;">VAT</div>
<svg style="left:983.5px;top:519px" width="6" height="12"><path d="M3 0.5 L6 4 H0 Z M0 7.4 H6 L3 11 Z" fill="#000"/></svg>
<div class="t" style="top:516.20px;font-size:13px;line-height:17px;color:#000;font-weight:bold;left:767.5px;width:600px;text-align:center;">Total</div>
<svg style="left:1094.5px;top:519px" width="6" height="12"><path d="M3 0.5 L6 4 H0 Z M0 7.4 H6 L3 11 Z" fill="#000"/></svg>
<div class="r" style="left:192px;top:550px;width:919px;height:1px;background:#000"></div>
<div class="r" style="left:192px;top:551px;width:919px;height:30px;background:#E6E6E6"></div>
<div class="t" style="top:553.00px;font-size:13px;line-height:17px;color:#000;letter-spacing:-0.2px;left:194.5px;">Alcohol</div>
<div class="t" style="top:553.00px;font-size:13px;line-height:17px;color:#000;letter-spacing:-0.25px;right:746.75px;text-align:right;">0,00</div>
<div class="t" style="top:553.00px;font-size:13px;line-height:17px;color:#000;letter-spacing:-0.25px;right:668.75px;text-align:right;">414,64</div>
<div class="t" style="top:553.00px;font-size:13px;line-height:17px;color:#000;letter-spacing:-0.7px;right:574.7px;text-align:right;">100%</div>
<div class="t" style="top:553.00px;font-size:13px;line-height:17px;color:#000;letter-spacing:-0.25px;right:477.75px;text-align:right;">0,00</div>
<div class="t" style="top:553.00px;font-size:13px;line-height:17px;color:#000;letter-spacing:-0.25px;right:381.25px;text-align:right;">414,64</div>
<div class="t" style="top:553.00px;font-size:13px;line-height:17px;color:#000;letter-spacing:-0.25px;right:285.75px;text-align:right;">372,38</div>
<div class="t" style="top:553.00px;font-size:13px;line-height:17px;color:#000;letter-spacing:-0.25px;right:190.25px;text-align:right;">42,26</div>
<div class="t" style="top:553.00px;font-size:13px;line-height:17px;color:#000;letter-spacing:-0.25px;right:79.25px;text-align:right;">414,64</div>
<div class="t" style="top:584.20px;font-size:13px;line-height:17px;color:#000;letter-spacing:-0.2px;left:194.5px;">Cold Drinks</div>
<div class="t" style="top:584.20px;font-size:13px;line-height:17px;color:#000;letter-spacing:-0.25px;right:746.75px;text-align:right;">0,00</div>
<div class="t" style="top:584.20px;font-size:13px;line-height:17px;color:#000;letter-spacing:-0.25px;right:668.75px;text-align:right;">90,00</div>
<div class="t" style="top:584.20px;font-size:13px;line-height:17px;color:#000;letter-spacing:-0.7px;right:574.7px;text-align:right;">100%</div>
<div class="t" style="top:584.20px;font-size:13px;line-height:17px;color:#000;letter-spacing:-0.25px;right:477.75px;text-align:right;">0,00</div>
<div class="t" style="top:584.20px;font-size:13px;line-height:17px;color:#000;letter-spacing:-0.25px;right:381.25px;text-align:right;">90,00</div>
<div class="t" style="top:584.20px;font-size:13px;line-height:17px;color:#000;letter-spacing:-0.25px;right:285.75px;text-align:right;">78,27</div>
<div class="t" style="top:584.20px;font-size:13px;line-height:17px;color:#000;letter-spacing:-0.25px;right:190.25px;text-align:right;">11,73</div>
<div class="t" style="top:584.20px;font-size:13px;line-height:17px;color:#000;letter-spacing:-0.25px;right:79.25px;text-align:right;">90,00</div>
<div class="r" style="left:192px;top:612px;width:919px;height:30px;background:#E6E6E6"></div>
<div class="t" style="top:613.80px;font-size:13px;line-height:17px;color:#000;letter-spacing:-0.2px;left:194.5px;">Extra Meats</div>
<div class="t" style="top:613.80px;font-size:13px;line-height:17px;color:#000;letter-spacing:-0.25px;right:746.75px;text-align:right;">0,00</div>
<div class="t" style="top:613.80px;font-size:13px;line-height:17px;color:#000;letter-spacing:-0.25px;right:668.75px;text-align:right;">24,00</div>
<div class="t" style="top:613.80px;font-size:13px;line-height:17px;color:#000;letter-spacing:-0.7px;right:574.7px;text-align:right;">100%</div>
<div class="t" style="top:613.80px;font-size:13px;line-height:17px;color:#000;letter-spacing:-0.25px;right:477.75px;text-align:right;">0,00</div>
<div class="t" style="top:613.80px;font-size:13px;line-height:17px;color:#000;letter-spacing:-0.25px;right:381.25px;text-align:right;">24,00</div>
<div class="t" style="top:613.80px;font-size:13px;line-height:17px;color:#000;letter-spacing:-0.25px;right:285.75px;text-align:right;">20,87</div>
<div class="t" style="top:613.80px;font-size:13px;line-height:17px;color:#000;letter-spacing:-0.25px;right:190.25px;text-align:right;">3,13</div>
<div class="t" style="top:613.80px;font-size:13px;line-height:17px;color:#000;letter-spacing:-0.25px;right:79.25px;text-align:right;">24,00</div>
<div class="t" style="top:644.20px;font-size:13px;line-height:17px;color:#000;letter-spacing:-0.2px;left:194.5px;">Freezos</div>
<div class="t" style="top:644.20px;font-size:13px;line-height:17px;color:#000;letter-spacing:-0.25px;right:746.75px;text-align:right;">0,00</div>
<div class="t" style="top:644.20px;font-size:13px;line-height:17px;color:#000;letter-spacing:-0.25px;right:668.75px;text-align:right;">26,00</div>
<div class="t" style="top:644.20px;font-size:13px;line-height:17px;color:#000;letter-spacing:-0.7px;right:574.7px;text-align:right;">100%</div>
<div class="t" style="top:644.20px;font-size:13px;line-height:17px;color:#000;letter-spacing:-0.25px;right:477.75px;text-align:right;">0,00</div>
<div class="t" style="top:644.20px;font-size:13px;line-height:17px;color:#000;letter-spacing:-0.25px;right:381.25px;text-align:right;">26,00</div>
<div class="t" style="top:644.20px;font-size:13px;line-height:17px;color:#000;letter-spacing:-0.25px;right:285.75px;text-align:right;">22,61</div>
<div class="t" style="top:644.20px;font-size:13px;line-height:17px;color:#000;letter-spacing:-0.25px;right:190.25px;text-align:right;">3,39</div>
<div class="t" style="top:644.20px;font-size:13px;line-height:17px;color:#000;letter-spacing:-0.25px;right:79.25px;text-align:right;">26,00</div>
<div class="r" style="left:192px;top:673px;width:919px;height:30px;background:#E6E6E6"></div>
<div class="t" style="top:675.00px;font-size:13px;line-height:17px;color:#000;letter-spacing:-0.2px;left:194.5px;">Hot Beverages</div>
<div class="t" style="top:675.00px;font-size:13px;line-height:17px;color:#000;letter-spacing:-0.25px;right:746.75px;text-align:right;">0,00</div>
<div class="t" style="top:675.00px;font-size:13px;line-height:17px;color:#000;letter-spacing:-0.25px;right:668.75px;text-align:right;">147,00</div>
<div class="t" style="top:675.00px;font-size:13px;line-height:17px;color:#000;letter-spacing:-0.7px;right:574.7px;text-align:right;">100%</div>
<div class="t" style="top:675.00px;font-size:13px;line-height:17px;color:#000;letter-spacing:-0.25px;right:477.75px;text-align:right;">0,00</div>
<div class="t" style="top:675.00px;font-size:13px;line-height:17px;color:#000;letter-spacing:-0.25px;right:381.25px;text-align:right;">147,00</div>
<div class="t" style="top:675.00px;font-size:13px;line-height:17px;color:#000;letter-spacing:-0.25px;right:285.75px;text-align:right;">127,82</div>
<div class="t" style="top:675.00px;font-size:13px;line-height:17px;color:#000;letter-spacing:-0.25px;right:190.25px;text-align:right;">19,18</div>
<div class="t" style="top:675.00px;font-size:13px;line-height:17px;color:#000;letter-spacing:-0.25px;right:79.25px;text-align:right;">147,00</div>
<div class="t" style="top:704.70px;font-size:13px;line-height:17px;color:#000;letter-spacing:-0.2px;left:194.5px;">Imported Juice</div>
<div class="t" style="top:704.70px;font-size:13px;line-height:17px;color:#000;letter-spacing:-0.25px;right:746.75px;text-align:right;">0,00</div>
<div class="t" style="top:704.70px;font-size:13px;line-height:17px;color:#000;letter-spacing:-0.25px;right:668.75px;text-align:right;">80,00</div>
<div class="t" style="top:704.70px;font-size:13px;line-height:17px;color:#000;letter-spacing:-0.7px;right:574.7px;text-align:right;">100%</div>
<div class="t" style="top:704.70px;font-size:13px;line-height:17px;color:#000;letter-spacing:-0.25px;right:477.75px;text-align:right;">0,00</div>
<div class="t" style="top:704.70px;font-size:13px;line-height:17px;color:#000;letter-spacing:-0.25px;right:381.25px;text-align:right;">80,00</div>
<div class="t" style="top:704.70px;font-size:13px;line-height:17px;color:#000;letter-spacing:-0.25px;right:285.75px;text-align:right;">69,56</div>
<div class="t" style="top:704.70px;font-size:13px;line-height:17px;color:#000;letter-spacing:-0.25px;right:190.25px;text-align:right;">10,44</div>
<div class="t" style="top:704.70px;font-size:13px;line-height:17px;color:#000;letter-spacing:-0.25px;right:79.25px;text-align:right;">80,00</div>
<div class="r" style="left:192px;top:734px;width:919px;height:30px;background:#E6E6E6"></div>
<div class="t" style="top:735.90px;font-size:13px;line-height:17px;color:#000;letter-spacing:-0.2px;left:194.5px;">Juices</div>
<div class="t" style="top:735.90px;font-size:13px;line-height:17px;color:#000;letter-spacing:-0.25px;right:746.75px;text-align:right;">0,00</div>
<div class="t" style="top:735.90px;font-size:13px;line-height:17px;color:#000;letter-spacing:-0.25px;right:668.75px;text-align:right;">4 384,00</div>
<div class="t" style="top:735.90px;font-size:13px;line-height:17px;color:#000;letter-spacing:-0.7px;right:574.7px;text-align:right;">100%</div>
<div class="t" style="top:735.90px;font-size:13px;line-height:17px;color:#000;letter-spacing:-0.25px;right:477.75px;text-align:right;">0,00</div>
<div class="t" style="top:735.90px;font-size:13px;line-height:17px;color:#000;letter-spacing:-0.25px;right:381.25px;text-align:right;">4 384,00</div>
<div class="t" style="top:735.90px;font-size:13px;line-height:17px;color:#000;letter-spacing:-0.25px;right:285.75px;text-align:right;">3 812,38</div>
<div class="t" style="top:735.90px;font-size:13px;line-height:17px;color:#000;letter-spacing:-0.25px;right:190.25px;text-align:right;">571,62</div>
<div class="t" style="top:735.90px;font-size:13px;line-height:17px;color:#000;letter-spacing:-0.25px;right:79.25px;text-align:right;">4 384,00</div>
<div class="t" style="top:766.20px;font-size:13px;line-height:17px;color:#000;letter-spacing:-0.2px;left:194.5px;">Kids Menu</div>
<div class="t" style="top:766.20px;font-size:13px;line-height:17px;color:#000;letter-spacing:-0.25px;right:746.75px;text-align:right;">0,00</div>
<div class="t" style="top:766.20px;font-size:13px;line-height:17px;color:#000;letter-spacing:-0.25px;right:668.75px;text-align:right;">100,00</div>
<div class="t" style="top:766.20px;font-size:13px;line-height:17px;color:#000;letter-spacing:-0.7px;right:574.7px;text-align:right;">100%</div>
<div class="t" style="top:766.20px;font-size:13px;line-height:17px;color:#000;letter-spacing:-0.25px;right:477.75px;text-align:right;">0,00</div>
<div class="t" style="top:766.20px;font-size:13px;line-height:17px;color:#000;letter-spacing:-0.25px;right:381.25px;text-align:right;">100,00</div>
<div class="t" style="top:766.20px;font-size:13px;line-height:17px;color:#000;letter-spacing:-0.25px;right:285.75px;text-align:right;">86,96</div>
<div class="t" style="top:766.20px;font-size:13px;line-height:17px;color:#000;letter-spacing:-0.25px;right:190.25px;text-align:right;">13,04</div>
<div class="t" style="top:766.20px;font-size:13px;line-height:17px;color:#000;letter-spacing:-0.25px;right:79.25px;text-align:right;">100,00</div>
<svg style="left:809px;top:513px" width="1" height="260"><line x1="0.5" y1="0" x2="0.5" y2="260" stroke="#000" stroke-width="1" stroke-dasharray="4 2.5"/></svg>
</div></div>
<div class="r" style="left:1168px;top:98px;width:16px;height:679px;background:#F0F0F0"></div>
<div class="r" style="left:1168px;top:241px;width:15px;height:410px;background:#CDCDCD"></div>
<svg style="left:1171px;top:104px" width="9" height="6"><path d="M1 4.8 L4.5 1.5 L8 4.8" fill="none" stroke="#606060" stroke-width="2.1"/></svg>
<svg style="left:1171px;top:750px" width="9" height="6"><path d="M1 1.2 L4.5 4.5 L8 1.2" fill="none" stroke="#606060" stroke-width="2.1"/></svg>
<div class="r" style="left:190px;top:761px;width:978px;height:1px;background:#fff"></div>
<div class="r" style="left:190px;top:762px;width:978px;height:15px;background:#F0F0F0"></div>
<div class="r" style="left:207px;top:762px;width:936px;height:15px;background:#CDCDCD"></div>
<svg style="left:195px;top:765px" width="6" height="9"><path d="M5 1 L1.7 4.5 L5 8" fill="none" stroke="#606060" stroke-width="2.1"/></svg>
<svg style="left:1156px;top:765px" width="6" height="9"><path d="M1 1 L4.3 4.5 L1 8" fill="none" stroke="#606060" stroke-width="2.1"/></svg>
<div class="r" style="left:1184px;top:72px;width:1px;height:707px;background:#5F5F5F"></div>
<div class="r" style="left:1185px;top:31px;width:1px;height:800px;background:#88A4C8"></div>
<div class="r" style="left:4px;top:783px;width:169px;height:44px;background:#DFEBF9;border:1px solid #A9B9D0"></div>
<div class="r" style="left:179px;top:783px;width:1004px;height:44px;background:#DFEBF9;border:1px solid #A9B9D0"></div>
<div class="t" style="top:792.92px;font-size:19px;line-height:23px;color:#FF0000;font-weight:bold;letter-spacing:0.3px;left:54px;">CLOSE</div>
<div class="r" style="left:53px;top:812px;width:14px;height:2px;background:#FF0000"></div>
<div class="t" style="top:793.32px;font-size:19px;line-height:23px;color:#0000FF;font-weight:bold;left:499.3px;transform:scaleX(1.151);transform-origin:0 0;">PRINT USING DESKTOP PRINTER</div>
<div class="r" style="left:498px;top:812px;width:14px;height:2px;background:#0000FF"></div>
</body></html>
